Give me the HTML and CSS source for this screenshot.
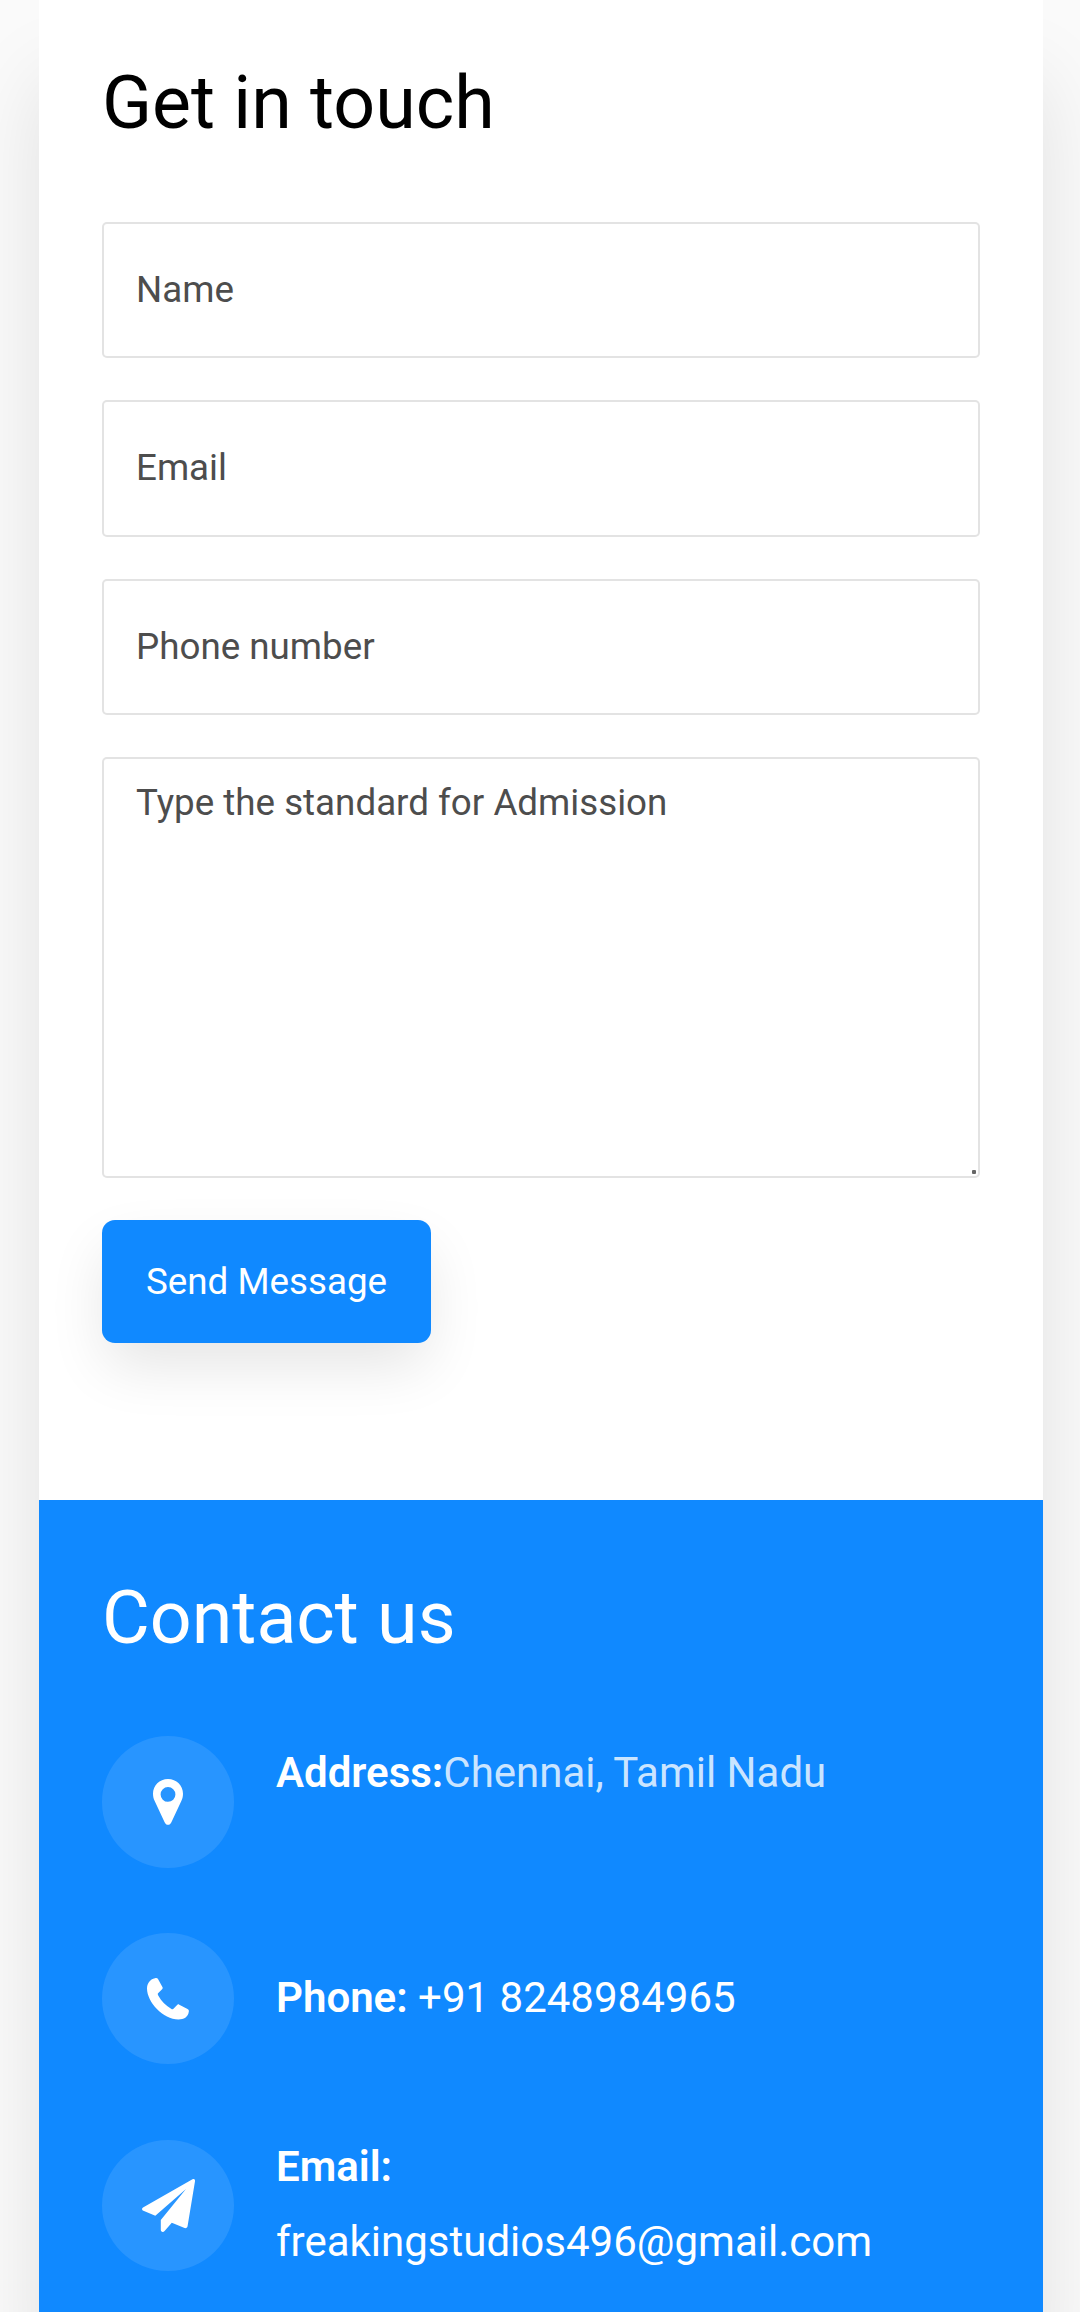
FILE: index.html
```html
<!DOCTYPE html>
<html lang="en">
<head>
<meta charset="utf-8">
<title>Get in touch</title>
<link rel="stylesheet" href="styles.css">
</head>
<body>
<main class="card">
  <section class="form-panel">
    <h3 class="title">Get in touch</h3>
    <form class="form">
      <input class="field" type="text" placeholder="Name">
      <input class="field" type="email" placeholder="Email">
      <input class="field" type="text" placeholder="Phone number">
      <div class="message">
        <textarea class="field field-area" placeholder="Type the standard for Admission"></textarea>
        <span class="grip"></span>
      </div>
      <button class="send" type="button">Send Message</button>
    </form>
  </section>
  <section class="info-panel">
    <h3 class="title title-light">Contact us</h3>
    <div class="row row-top">
      <div class="badge">
        <svg width="30" height="46" viewBox="0 0 30 46" fill="#fff" fill-rule="evenodd"><path d="M15 0C6.500 0 0 6.500 0 14.700c0 3 .6 5 1.800 7.500l9.800 21c.7 1.700 2 2.600 3.400 2.600s2.700-.9 3.400-2.600l9.800-21C29.400 19.700 30 17.700 30 14.700 30 6.500 23.500 0 15 0Zm0 8a7.400 7.400 0 1 1 0 14.800A7.400 7.400 0 0 1 15 8Z"/></svg>
      </div>
      <p class="text"><b>Address:</b><span class="muted">Chennai, Tamil Nadu</span></p>
    </div>
    <div class="row row-phone">
      <div class="badge">
        <svg width="42" height="42" viewBox="0 0 42 42" fill="#fff"><path d="M8 .2C9.500-.1 10.500.1 11 1l4.400 8c.5 1 .4 1.500-.3 2.300l-3.800 3.600c-.7.8-.7 1.400-.2 2.400 3.300 6 7.400 10.200 13 13.400 1 .6 1.800.8 2.400.1l3.600-3.800c.7-.8 1.300-.8 2.200-.3l8.200 4.300c1.200.6 1.600 1.500 1.300 2.800-.8 5.500-5 7.700-10.300 7.700C16 41.500 0 24 0 10.500 0 5.500 2.800 1.300 8 .2Z"/></svg>
      </div>
      <p class="text"><b>Phone:</b> +91 8248984965</p>
    </div>
    <div class="row row-email">
      <div class="badge">
        <svg width="53" height="53" viewBox="0 0 53 53" fill="#fff"><path d="M50.500.3C52.200-.4 53.200.7 53 2.300L45.600 47c-.3 1.800-1.500 2.500-3 2l-12.800-5.300-7 8.100c-1.600 1.900-4 1.400-4-1V41L44 10 13.300 36.700 1.400 31.800C-.3 31-.4 29.400 1 28.500Z"/></svg>
      </div>
      <p class="text"><b>Email:</b><br>freakingstudios496@gmail.com</p>
    </div>
  </section>
</main>
</body>
</html>
```
FILE: styles.css
```css
* { box-sizing: border-box; }
body {
  margin: 0;
  height: 2312px;
  overflow: hidden;
  background: #fafafa;
  font-family: Roboto, sans-serif;
  font-size: 42px;
  line-height: 75.6px;
}
.card {
  width: 1004px;
  height: 2312px;
  margin-left: 39px;
  background: #fff;
  box-shadow: 0 79px 79px rgba(0, 0, 0, .1);
}
.form-panel {
  height: 1500px;
  padding: 48px 63px 0;
}
.title {
  margin: 0;
  font-size: 73.5px;
  font-weight: 400;
  line-height: 110px;
  color: #000;
}
.title-light { color: #fff; }
.form {
  display: flex;
  flex-direction: column;
  align-items: flex-start;
  gap: 42.25px;
  margin-top: 63.8px;
}
.field {
  display: block;
  width: 878px;
  height: 136.25px;
  margin: 0;
  padding: 0 32px 1px;
  border: 2px solid rgba(0, 0, 0, .11);
  border-radius: 5px;
  background: #fff;
  font: 36.75px/55px Roboto, sans-serif;
  outline: none;
}
.field::placeholder { color: #4d4d4d; opacity: 1; }
.message { position: relative; }
.field-area {
  height: 420.3px;
  padding: 16px 32px;
  resize: none;
}
.grip {
  position: absolute;
  right: 4px;
  bottom: 4px;
  width: 4px;
  height: 4px;
  border-radius: 1px;
  background: #666;
}
.send {
  width: 329px;
  height: 123px;
  padding: 0;
  border: 0;
  border-radius: 13px;
  background: #1089ff;
  box-shadow: 0 26px 60px -5px rgba(0, 0, 0, .11);
  color: #fff;
  font: 36.75px/55px Roboto, sans-serif;
}
.info-panel {
  height: 812px;
  padding: 63px 63px 0;
  background: #1089ff;
  color: #fff;
}
.row {
  display: flex;
  align-items: center;
  gap: 42px;
}
.row-top { align-items: flex-start; margin-top: 63px; }
.row-phone { margin-top: 65.3px; }
.row-email { margin-top: 65.5px; }
.badge {
  display: flex;
  flex: none;
  align-items: center;
  justify-content: center;
  width: 132px;
  height: 131.5px;
  border-radius: 50%;
  background: rgba(255, 255, 255, .1);
}
.text { margin: -1px 0 1px; white-space: nowrap; }
.text b { font-weight: 600; }
.muted { color: rgba(255, 255, 255, .8); }
```
